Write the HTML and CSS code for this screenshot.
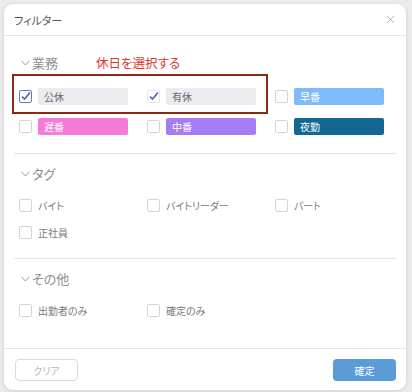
FILE: index.html
```html
<!DOCTYPE html>
<html lang="ja">
<head>
    <meta charset="UTF-8">
    <title>フィルター</title>
    <link rel="stylesheet" href="styles.css">
</head>
<body>
    <div class="modal">
        <div class="modal-header">
            <span class="modal-title">フィルター</span>
            <svg class="close-icon" width="9" height="9" viewBox="0 0 9 9">
                <path d="M1 1L8 8M8 1L1 8" stroke="#b5b5b5" stroke-width="1" fill="none"/>
            </svg>
        </div>

        <div class="modal-body">
            <div class="section">
                <div class="section-head">
                    <svg class="chevron" width="9" height="6" viewBox="0 0 9 6">
                        <path d="M0.5 0.8L4.5 5L8.5 0.8" stroke="#999" stroke-width="1" fill="none"/>
                    </svg>
                    <span class="section-title">業務</span>
                    <span class="note">休日を選択する</span>
                </div>
                <div class="grid work-grid">
                    <div class="mark-box"></div>
                    <label class="item">
                        <span class="check checked focus">
                            <svg width="13" height="13" viewBox="0 0 13 13"><path d="M3 6.5L5.5 9L11 2.5" stroke="#4f63a8" stroke-width="1.6" fill="none"/></svg>
                        </span>
                        <span class="chip chip-off">公休</span>
                    </label>
                    <label class="item">
                        <span class="check checked">
                            <svg width="13" height="13" viewBox="0 0 13 13"><path d="M3 6.5L5.5 9L11 2.5" stroke="#4f63a8" stroke-width="1.6" fill="none"/></svg>
                        </span>
                        <span class="chip chip-off">有休</span>
                    </label>
                    <label class="item">
                        <span class="check"></span>
                        <span class="chip early">早番</span>
                    </label>
                    <label class="item">
                        <span class="check"></span>
                        <span class="chip late">遅番</span>
                    </label>
                    <label class="item">
                        <span class="check"></span>
                        <span class="chip middle">中番</span>
                    </label>
                    <label class="item">
                        <span class="check"></span>
                        <span class="chip night">夜勤</span>
                    </label>
                </div>
            </div>

            <div class="section">
                <div class="section-head">
                    <svg class="chevron" width="9" height="6" viewBox="0 0 9 6">
                        <path d="M0.5 0.8L4.5 5L8.5 0.8" stroke="#999" stroke-width="1" fill="none"/>
                    </svg>
                    <span class="section-title">タグ</span>
                </div>
                <div class="grid tag-grid">
                    <label class="item"><span class="check"></span><span class="text">バイト</span></label>
                    <label class="item"><span class="check"></span><span class="text">バイトリーダー</span></label>
                    <label class="item"><span class="check"></span><span class="text">パート</span></label>
                    <label class="item"><span class="check"></span><span class="text">正社員</span></label>
                </div>
            </div>

            <div class="section last">
                <div class="section-head">
                    <svg class="chevron" width="9" height="6" viewBox="0 0 9 6">
                        <path d="M0.5 0.8L4.5 5L8.5 0.8" stroke="#999" stroke-width="1" fill="none"/>
                    </svg>
                    <span class="section-title">その他</span>
                </div>
                <div class="grid tag-grid">
                    <label class="item"><span class="check"></span><span class="text">出勤者のみ</span></label>
                    <label class="item"><span class="check"></span><span class="text">確定のみ</span></label>
                </div>
            </div>
        </div>

        <div class="modal-footer">
            <button class="btn btn-clear">クリア</button>
            <button class="btn btn-ok">確定</button>
        </div>
    </div>
</body>
</html>
```

FILE: styles.css
```css
* {
    margin: 0;
    padding: 0;
    box-sizing: border-box;
}

body {
    font-family: "Noto Sans CJK JP", "Noto Sans", sans-serif;
    font-feature-settings: "palt";
    background-color: #ebebec;
    padding: 4px 0 0 4px;
    width: 412px;
    height: 392px;
    overflow: hidden;
}

.modal {
    width: 402px;
    height: 386px;
    background-color: #fff;
    border-radius: 9px;
    box-shadow: 0 1px 4px rgba(0,0,0,0.12);
    display: flex;
    flex-direction: column;
}

.modal-header {
    height: 32px;
    border-bottom: 1px solid #e6e6e6;
    display: flex;
    align-items: center;
    justify-content: space-between;
    padding: 0 11px 0 10px;
}

.modal-title {
    font-size: 11px;
    color: #555;
}

.modal-body {
    flex: 1;
    padding: 0 9px 0 10px;
}

.section {
    border-bottom: 1px solid #e4e4e4;
    padding-top: 9px;
    padding-bottom: 17px;
}

.section:first-child {
    padding-top: 16px;
    padding-bottom: 18px;
}

.section.last {
    border-bottom: none;
}

.section-head {
    height: 20px;
    display: flex;
    align-items: center;
    padding-left: 7px;
}

.chevron {
    margin-right: 2px;
    margin-top: 2px;
}

.section-title {
    font-size: 13px;
    color: #8f8f8f;
}

.note {
    font-size: 12.5px;
    color: #d8392d;
    margin-left: 38px;
}

.grid {
    position: relative;
    display: grid;
    grid-template-columns: 128px 128px 128px;
    margin-left: 5px;
}

.work-grid {
    margin-top: 16px;
    row-gap: 13px;
}

.tag-grid {
    margin-top: 14px;
    row-gap: 10px;
}

.mark-box {
    position: absolute;
    left: -7px;
    top: -14px;
    width: 256px;
    height: 40px;
    border: 2px solid #8a2a12;
}

.item {
    display: flex;
    align-items: center;
    height: 17px;
}

.check {
    width: 13px;
    height: 13px;
    border: 1px solid #d4d4d4;
    border-radius: 2px;
    background-color: #fff;
    margin-right: 6px;
    flex-shrink: 0;
    position: relative;
}

.check svg {
    position: absolute;
    left: -1px;
    top: -1px;
}

.check.checked {
    border-color: #dfe3ee;
}

.check.focus {
    border: 1.5px solid #6b7db9;
}

.chip {
    width: 90px;
    height: 17px;
    border-radius: 2px;
    font-size: 10px;
    line-height: 17px;
    padding-left: 6px;
    color: #fff;
}

.chip-off {
    background-color: #ececf0;
    color: #666;
}

.early {
    background-color: #7dbbfb;
}

.late {
    background-color: #f57bd8;
}

.middle {
    background-color: #a57cf4;
}

.night {
    background-color: #126893;
}

.text {
    font-size: 10px;
    color: #7a7a7a;
}

.modal-footer {
    border-top: 1px solid #e6e6e6;
    display: flex;
    justify-content: space-between;
    padding: 10px 10px 9px 11px;
}

.btn {
    width: 63px;
    height: 22px;
    border-radius: 4px;
    font-family: "Noto Sans CJK JP", "Noto Sans", sans-serif;
    font-feature-settings: "palt";
    font-size: 10px;
}

.btn-clear {
    background-color: #fff;
    border: 1px solid #dcdcdc;
    color: #b8b8b8;
}

.btn-ok {
    background-color: #5b9bd6;
    border: none;
    color: #fff;
}
```
